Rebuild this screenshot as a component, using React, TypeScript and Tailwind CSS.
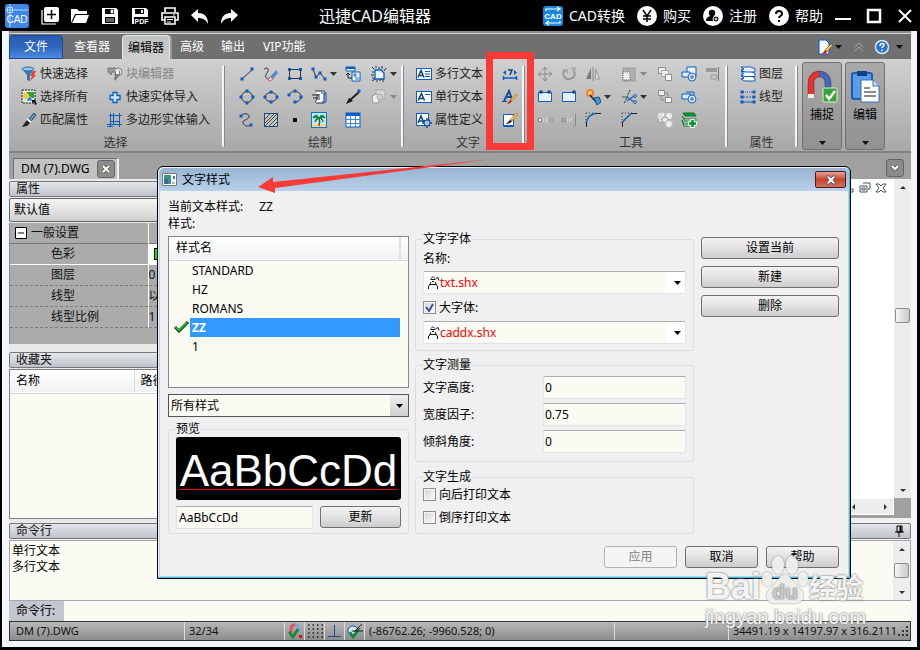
import React from 'react';
import type { ReactNode } from 'react';

const BLUE = '#0b5cc4';
const GRAY = '#8a8a8a';

function Icon({ children, size = 'w-4 h-4', box = '0 0 16 16' }: { children: ReactNode; size?: string; box?: string }) {
  return (
    <svg viewBox={box} className={`${size} shrink-0`} fill="none" aria-hidden="true">
      {children}
    </svg>
  );
}

// Small square handles drawn at the nodes of the drawing tools
function Nodes({ points, color = BLUE }: { points: number[][]; color?: string }) {
  return (
    <>
      {points.map(([x, y]) => (
        <rect key={`${x}-${y}`} x={x - 1.5} y={y - 1.5} width="3" height="3" fill={color} />
      ))}
    </>
  );
}

const icons: Record<string, ReactNode> = {
  filter: (
    <>
      <path d="M1 3l5 6v5l3 1V9l4-6z" fill="#2b7ab8" />
      <ellipse cx="7" cy="3" rx="6" ry="2" fill="#8cc4ea" stroke="#2b6da4" />
      <path d="M12 5l-3 5h2l-2 5 6-6h-2l2-4z" fill="#ee3b35" />
    </>
  ),
  selectAll: (
    <>
      <rect x="1" y="1" width="13" height="13" fill="#d9ead0" stroke="#222" strokeDasharray="2 1" />
      <rect x="6" y="3" width="7" height="6" fill="#3a9c3a" />
      <circle cx="5" cy="7" r="3" fill="#f5c63a" />
      <path d="M5 12l3.500-5 4 5z" fill="#2d7dd2" stroke="#fff" strokeWidth=".6" />
      <path d="M11 11h4l-1 1 2 3-2 1-1-3-2 1z" fill="#111" />
    </>
  ),
  match: (
    <>
      <path d="M8 7l5-6 2 2-5 6z" fill="#5f93cc" stroke="#23466e" />
      <path d="M6 8l3 3-3 3-5 1 2-3z" fill="#222" />
      <path d="M6 7l4 3" stroke="#eee" strokeWidth="2" />
    </>
  ),
  blockEdit: (
    <>
      <path d="M1 2h8v4H5L4 9 2 7V6H1z" fill="#999" stroke="#777" />
      <circle cx="11" cy="6" r="4" fill="#ddd" stroke="#888" />
      <path d="M8 5h5v3l-2 3-3 4-1-2 1-3z" fill="#777" />
      <path d="M9 5h3v3H9z" fill="#fff" />
    </>
  ),
  plusCross: <path d="M6 3.500h4v3h3v4h-3v3H6v-3H3v-4h3z" fill="#cfe4ff" stroke={BLUE} strokeWidth="1.300" />,
  polygonIn: <path d="M3.500 1v14M6.500 1v11M12.500 1v14M0 12.500h15M2 3.500h13M3 9.500h10M0 14.500h6" stroke={BLUE} />,
  line: (
    <>
      <path d="M3 13L13 4" stroke="#333" />
      <Nodes points={[[3, 13], [13, 3]]} />
    </>
  ),
  sketch: (
    <>
      <path d="M1 3c5-3 5 2 3 4s-2 6 2 6" stroke="#333" />
      <path d="M7 11l6-7 2 3-5 6z" fill="#4d8edb" />
      <path d="M7 11l3 2-3 2-2-1z" fill="#f3f3f3" stroke="#e23d3d" strokeWidth=".8" />
    </>
  ),
  rect: (
    <>
      <rect x="2.500" y="3.500" width="11" height="9" stroke="#333" />
      <Nodes points={[[2.5, 3.5], [13.5, 3.5], [2.5, 12.5], [13.5, 12.5]]} />
    </>
  ),
  polyline: (
    <>
      <path d="M2 3l3 8 4-4 5 6" stroke="#333" />
      <Nodes points={[[2, 3], [5, 11], [9, 7], [14, 13]]} />
    </>
  ),
  insertBlock: (
    <>
      <path d="M1 1h9v4H1z" fill="#fff" stroke={BLUE} />
      <path d="M1 2h9" stroke={BLUE} strokeWidth="2" />
      <path d="M7 6h8v9H7z" fill="#fff" stroke={BLUE} />
      <circle cx="10" cy="9" r="2" fill="#5b9be0" />
      <path d="M10 11h4v3h-4z" fill="#8ab9ee" />
      <path d="M3 7v5h4M1 9l2-2 2 2" stroke="#222" />
    </>
  ),
  region: (
    <>
      <path d="M4 4h6l3 3v6H4z" fill="#eaf3ff" stroke={BLUE} strokeWidth="1.300" />
      <path d="M1 1l2 2M5 0v2M8 1v2M11 0v3M15 2l-2 3M1 6h2M0 9h3M1 12h2M1 15l3-2M6 16v-2M9 15v-2M12 16v-3" stroke="#234" />
    </>
  ),
  circle: (
    <>
      <circle cx="8" cy="8" r="5.500" stroke="#333" />
      <Nodes points={[[8, 2], [8, 14], [2, 8], [14, 8]]} />
    </>
  ),
  ellipse: (
    <>
      <ellipse cx="8" cy="8" rx="6" ry="4.500" stroke="#333" />
      <Nodes points={[[8, 3], [8, 13], [2, 8], [14, 8]]} />
    </>
  ),
  arc: (
    <>
      <path d="M2 6c2-5 12-5 12 2 0 3-3 5-6 5" stroke="#333" />
      <Nodes points={[[2, 6], [8, 2], [14, 8], [8, 13]]} />
    </>
  ),
  scroll: (
    <>
      <path d="M4 2h8c3 0 3 3 1 3v9H6c-2 0-2-3 0-3V5" fill="#f5f8fc" stroke="#234" />
      <path d="M10 4h5v9h-4" stroke={BLUE} />
      <path d="M1 6h7M2 9h5M8 5v6" stroke="#333" />
    </>
  ),
  pointer: (
    <>
      <path d="M4 12L14 3" stroke="#222" strokeWidth="2" />
      <path d="M1 15l3-6 4 3z" fill="#111" />
      <Nodes points={[[14, 2]]} />
    </>
  ),
  wipeout: (
    <>
      <path d="M5 1h9v9H5z" fill="#d8d8d8" stroke="#aaa" />
      <path d="M1 7l4-2 4 4-2 5H2z" fill="#eee" stroke="#999" />
      <circle cx="9" cy="8" r="3" fill="#ccc" stroke="#aaa" />
    </>
  ),
  spline: (
    <>
      <path d="M2 4c3-4 9-2 8 1s-7 3-6 6 5 4 8 2" stroke="#333" />
      <Nodes points={[[2, 4], [12, 13]]} />
    </>
  ),
  hatch: (
    <>
      <rect x="1.500" y="1.500" width="13" height="13" fill="#c7c7c7" stroke="#1b4d80" />
      <path d="M2 7l5-5M2 11l9-9M2 14L14 2M6 14l8-8M10 14l4-4" stroke="#444" />
    </>
  ),
  dot: <rect x="6" y="6" width="4" height="4" fill="#111" />,
  palm: (
    <>
      <rect x=".5" y=".5" width="15" height="15" fill="#b9ecf7" stroke="#1673c4" />
      <path d="M1 12h14v3H1z" fill="#f1d58a" />
      <path d="M8 6c1 3 1 5 0 8" stroke="#6b4a1e" strokeWidth="1.500" />
      <path d="M8 6C6 2 3 3 2 6c2-1 4-1 6 0-2 0-4 1-4 4 1-2 3-3 4-4 2 0 3 2 4 4 0-3-1-4-4-4 2-1 4-1 6 0-1-3-4-4-6 0" fill="#12803a" stroke="#12803a" />
    </>
  ),
  table: (
    <>
      <rect x="1" y="1" width="14" height="14" fill="#fff" stroke={BLUE} />
      <path d="M1 2.500h14" stroke={BLUE} strokeWidth="3" />
      <path d="M1 7.500h14M1 11.500h14M5.500 3v12M10.500 3v12" stroke="#3a86d8" />
    </>
  ),
  mtext: (
    <>
      <rect x=".5" y="2.500" width="15" height="11" fill="#fff" stroke={BLUE} />
      <path d="M2 11.500L5 4.500l3 7M3 9.500h4" stroke="#123f7c" strokeWidth="1.500" />
      <path d="M9 5.500h5M9 8h5M9 10.500h5" stroke={BLUE} />
    </>
  ),
  stext: (
    <>
      <rect x=".5" y="2.500" width="15" height="11" fill="#fff" stroke={BLUE} />
      <path d="M2 11.500L5.500 4.500l3 7M3 9.500h4" stroke="#123f7c" strokeWidth="1.500" />
      <path d="M9 5.500h5" stroke={BLUE} />
    </>
  ),
  attr: (
    <>
      <rect x=".5" y="1.500" width="12" height="12" fill="#fff" stroke={BLUE} />
      <path d="M2 11L5 4l3 7M3 9h4" stroke="#123f7c" strokeWidth="1.500" />
      <circle cx="11" cy="11" r="3" fill="#9cc5f2" stroke="#174a8c" />
      <path d="M11 6v2M11 14v2M6 11h2M14 11h2M8 8l1 1M13 13l1 1M14 8l-1 1M8 14l1-1" stroke="#174a8c" strokeWidth="1.500" />
    </>
  ),
  fieldWidth: (
    <>
      <path d="M1.500 10v4M14.500 10v4M1 12h14" stroke={BLUE} strokeWidth="1.500" />
      <path d="M4 4L1 6.500 4 9zM12 4l3 2.500L12 9z" fill={BLUE} />
      <path d="M6 4h4L8 9" stroke="#123f7c" strokeWidth="1.500" />
    </>
  ),
  textStyle: (
    <>
      <path d="M2 12L7 2l3 8M4 8h5" stroke="#174a9c" strokeWidth="2" />
      <path d="M0 12.500h5" stroke="#174a9c" />
      <path d="M8 11l6-6 2 1-6 6z" fill="#f6c343" stroke="#8a5a10" strokeWidth=".5" />
      <path d="M5 15l3-4 2 1c-1 2-3 3-5 3z" fill="#c22" />
    </>
  ),
  textEdit: (
    <>
      <path d="M1.500 2.500h10v12h-10z" fill="#fff" stroke={BLUE} />
      <path d="M2 14h9" stroke={BLUE} strokeWidth="2" />
      <path d="M8 8l6-7 2 1-6 7z" fill="#f6c343" stroke="#8a5a10" strokeWidth=".5" />
      <path d="M4 12l4-4 2 1c-1 2-4 3-6 3z" fill="#222" />
    </>
  ),
  move: <path d="M8 1v14M1 8h14M5.500 4L8 1l2.500 3M5.500 12L8 15l2.500-3M4 5.500L1 8l3 2.500M12 5.500L15 8l-3 2.500" stroke={GRAY} />,
  rotate: (
    <>
      <path d="M4 4c-4 4 0 10 5 9 5-1 6-6 3-9" stroke="#999" strokeWidth="2" />
      <path d="M1 3h6v5zM9 2l6-1-1 5z" fill="#aaa" />
    </>
  ),
  mirror: (
    <>
      <path d="M6 2v11H1z" fill="#777" />
      <path d="M10.500 3v10h4z" fill="#ddd" stroke="#999" />
      <path d="M8 1v14" stroke="#888" />
    </>
  ),
  scale: (
    <>
      <rect x="2" y="2" width="12" height="13" fill="#b0b0b0" stroke="#999" />
      <rect x="2" y="6" width="7" height="8" fill="#eee" stroke="#666" strokeDasharray="1 1" />
    </>
  ),
  copies: (
    <>
      <path d="M1.500 1.500h7v6h-7z" fill="#eee" stroke={GRAY} />
      <path d="M4.500 4.500h7v6h-7z" fill="#eee" stroke="#aaa" />
      <path d="M8.500 8.500h6v6h-6z" fill="#f7f7f7" stroke={GRAY} />
    </>
  ),
  copies2: (
    <>
      <path d="M1.500 1.500h6v5h-6z" fill="#eee" stroke={GRAY} />
      <path d="M4 7v4h3M8 4h3v4" stroke={GRAY} />
      <path d="M8.500 8.500h6v5h-6z" fill="#f7f7f7" stroke={GRAY} />
    </>
  ),
  blobs: (
    <>
      <circle cx="4" cy="4" r="3.500" fill="#ddd" />
      <circle cx="12" cy="4" r="3" fill="#eee" />
      <circle cx="8" cy="8" r="3" fill="#e8e8e8" stroke="#999" />
      <circle cx="12" cy="12" r="3.500" fill="#eee" stroke="#bbb" />
      <path d="M6 1l1 3M2 8l3 1" stroke="#fff" />
    </>
  ),
  group: (
    <>
      <path d="M6 1h9v9H6z" fill="#eaf3ff" stroke={BLUE} />
      <path d="M1 6h8v5H1z" fill="#dcebff" stroke={BLUE} />
      <circle cx="11" cy="11" r="4" fill="#cfe2fa" stroke="#2867b4" />
      <path d="M11 9v4M9 11h4" stroke="#2867b4" />
    </>
  ),
  group2: (
    <>
      <path d="M5 3h8v4" stroke={BLUE} />
      <path d="M1 5h9v5H1z" fill="#dcebff" stroke={BLUE} />
      <circle cx="11" cy="10" r="4" fill="#cfe2fa" stroke="#2867b4" />
      <path d="M11 8v4M9 10h4" stroke="#2867b4" />
    </>
  ),
  layersAdd: (
    <>
      <path d="M2 1h11l2 3H4z" fill="#15943c" stroke="#0e6e2b" />
      <path d="M1 4l2 3h12v2H4z" fill="#e8f7ea" stroke="#0f7a31" />
      <path d="M1 8l2 4h5v2H3z" fill="#e8f7ea" stroke="#0f7a31" />
      <path d="M7 11.500h9M11.500 7v9" stroke="#e8f7ea" strokeWidth="4.500" />
      <path d="M8 11.500h7M11.500 8v7" stroke="#0c8f33" strokeWidth="2.500" />
    </>
  ),
  align: (
    <>
      <path d="M1 2h11v4H1z" fill="#999" />
      <path d="M6 9h6v4H6z" stroke="#999" />
      <path d="M13.500 1v14" stroke="#777" />
    </>
  ),
  breakRect: (
    <>
      <path d="M1.500 3.500h13v9h-13z" fill="#e4f0ff" stroke={BLUE} />
      <Nodes points={[[4, 3], [12, 3]]} color="#123f8c" />
    </>
  ),
  joinRect: (
    <>
      <path d="M1.500 3.500h13v9h-13z" fill="#e4f0ff" stroke={BLUE} />
      <Nodes points={[[13, 3]]} color="#123f8c" />
    </>
  ),
  explode: (
    <>
      <circle cx="5" cy="4" r="4" fill="#ee7d3a" />
      <circle cx="5" cy="4" r="2" fill="#ffd25e" />
      <path d="M5 6l6 7" stroke="#222" strokeWidth="1.500" />
      <path d="M9 9l5-1 2 5-4 3z" fill="#4a97d4" stroke="#1a4c80" />
    </>
  ),
  trim: (
    <>
      <path d="M9 1L3 15" stroke="#333" strokeDasharray="2 1" />
      <path d="M1 8h6" stroke="#555" />
      <path d="M6 8l7 5M6 12l7-5" stroke="#2867b4" strokeWidth="1.500" />
      <circle cx="14" cy="7" r="1.500" stroke="#2867b4" />
      <circle cx="14" cy="13" r="1.500" stroke="#2867b4" />
    </>
  ),
  stretch: (
    <>
      <path d="M1.500 6.500h3v3h-3z" fill="#fff" stroke="#888" />
      <path d="M6 7h6M6 9h6" stroke="#eee" strokeDasharray="1 1" />
      <path d="M12.500 6.500h3v3h-3z" stroke="#999" />
    </>
  ),
  extend: (
    <>
      <path d="M1.500 6.500h3v3h-3z" stroke="#888" />
      <path d="M6 7h6M6 9h6" stroke="#eee" strokeDasharray="1 1" />
      <path d="M14.500 2v12h-2" stroke="#888" />
    </>
  ),
  fillet: (
    <>
      <path d="M1 1h12M1 1v12" stroke="#333" strokeDasharray="1 2" />
      <path d="M1.500 15v-4M11 1.500h5" stroke="#222" />
      <path d="M1.500 11c0-5 4-9 9-9.500" stroke={BLUE} strokeWidth="1.500" />
    </>
  ),
  chamfer: (
    <>
      <path d="M1 1h12M1 1v12" stroke="#333" strokeDasharray="1 2" />
      <path d="M1.500 15v-5M10 1.500h6" stroke="#222" />
      <path d="M1.500 10L10 1.500" stroke={BLUE} strokeWidth="1.500" />
    </>
  ),
  layers: (
    <>
      <path d="M1 10h10l4 2v3H5l-4-2 3-1z" fill="#fff" stroke={BLUE} />
      <path d="M1 5.500h10l4 2v3H5l-4-2 3-1z" fill="#fff" stroke={BLUE} />
      <path d="M1 1h10l4 2v3H5L1 4l3-1z" fill="#e4f0ff" stroke={BLUE} />
    </>
  ),
  linetype: (
    <>
      <path d="M3 3h10" stroke={BLUE} strokeDasharray="1 1" />
      <path d="M3 8h10" stroke={BLUE} strokeDasharray="2 1" />
      <path d="M3 13h10" stroke={BLUE} />
      <Nodes points={[[2, 3], [14, 3], [2, 8], [14, 8], [2, 13], [14, 13]]} />
    </>
  ),
};

function Caret({ color = '#333' }: { color?: string }) {
  return (
    <svg viewBox="0 0 7 4" className="w-[7px] h-1 shrink-0" aria-hidden="true">
      <path d="M0 0h7L3.500 4z" fill={color} />
    </svg>
  );
}

function Tool({ name, label, muted, caret }: { name: string; label?: string; muted?: boolean; caret?: string }) {
  return (
    <button
      aria-label={label ? undefined : name}
      className={`flex items-center h-[23px] whitespace-nowrap ${muted ? 'text-[#868686]' : 'text-[#222]'}`}
    >
      <Icon>{icons[name]}</Icon>
      {label && <span className="ml-[3px]">{label}</span>}
      {caret && <span className="ml-[3px]"><Caret color={caret} /></span>}
    </button>
  );
}

function Group({ title, children }: { title: string; children: ReactNode }) {
  return (
    <section className="flex flex-col items-start pt-[3px]">
      {children}
      <h2 className="w-full text-center leading-5 mt-0.5 text-[#333]">{title}</h2>
    </section>
  );
}

function Separator() {
  return <div className="w-[3px] h-[82px] mt-1.5 rounded-full bg-[#f4f4fa] border-r border-[#888] shrink-0" />;
}

const drawTools: [string, string?][] = [
  ['line'], ['sketch'], ['rect'], ['polyline', '#333'], ['insertBlock'], ['region', '#333'],
  ['circle'], ['ellipse'], ['arc'], ['scroll'], ['pointer'], ['wipeout', '#888'],
  ['spline'], ['hatch'], ['dot'], ['palm'], ['table'],
];

const editTools: [string, string?][] = [
  ['move'], ['rotate'], ['mirror'], ['scale', '#888'], ['copies'], ['group'], ['align'],
  ['breakRect'], ['joinRect'], ['explode', '#333'], ['trim', '#333'], ['copies2'], ['group2'], [''],
  ['stretch'], ['extend'], ['fillet'], ['chamfer'], ['blobs'], ['layersAdd'],
];

function TitleBar() {
  const links = [
    {
      label: 'CAD转换',
      icon: (
        <>
          <rect width="20" height="20" rx="3" fill="#1787e0" />
          <path d="M3 5V3h13M14 1l3 2-3 2M17 15v2H4M6 15l-3 2 3 2" stroke="#fff" strokeWidth="1.200" />
          <text x="10" y="13" textAnchor="middle" fontSize="8" fontWeight="bold" fontFamily="Liberation Sans, sans-serif" fill="#fff">CAD</text>
        </>
      ),
    },
    {
      label: '购买',
      icon: (
        <>
          <circle cx="10" cy="10" r="10" fill="#fff" />
          <path d="M6 4l4 6 4-6M10 10v6M6 10h8M6 13h8" stroke="#000" strokeWidth="1.500" />
        </>
      ),
    },
    {
      label: '注册',
      icon: (
        <>
          <circle cx="10" cy="10" r="10" fill="#fff" />
          <circle cx="9" cy="7" r="3.200" fill="#000" />
          <path d="M3 15c0-3 2-5 6-5s5 2 5 5z" fill="#000" />
          <circle cx="13" cy="13" r="3" fill="#000" stroke="#fff" />
          <path d="M11.500 13h3M13 11.500v3" stroke="#fff" />
        </>
      ),
    },
    {
      label: '帮助',
      icon: (
        <>
          <circle cx="10" cy="10" r="10" fill="#fff" />
          <path d="M7 8c0-4 6-4 6 0 0 2-3 2-3 4M10 14v2" stroke="#000" strokeWidth="2" />
        </>
      ),
    },
  ];

  return (
    <header className="h-[31px] flex items-center justify-between bg-black text-white pl-[5px] pr-[7px] whitespace-nowrap">
      <div className="flex items-center">
        <Icon size="w-6 h-6" box="0 0 24 24">
          <rect width="24" height="24" rx="3" fill="#3f87e6" />
          <path d="M5 0v23M0 6h23M2.500 3.500h5v5h-5z" stroke="#b9d8ff" />
          <text x="12" y="19" textAnchor="middle" fontSize="10" fontFamily="Liberation Sans, sans-serif" fill="#fff">CAD</text>
        </Icon>
        <div className="flex items-center gap-3 ml-3">
          <button aria-label="新建">
            <Icon size="w-[18px] h-[18px]" box="0 0 18 18">
              <path d="M1 3v14h14" stroke="#fff" strokeWidth="1.200" />
              <rect x="3" y="0" width="15" height="15" rx="2" fill="#fff" />
              <path d="M10.500 3v9M6 7.500h9" stroke="#000" strokeWidth="1.500" />
            </Icon>
          </button>
          <button aria-label="打开">
            <Icon size="w-[18px] h-[18px]" box="0 0 18 18">
              <path d="M0 16V2h6l2 2h8v3H4z" fill="#fff" />
              <path d="M5 8h13l-3 8H1z" fill="#fff" />
            </Icon>
          </button>
          <button aria-label="保存">
            <Icon size="w-[18px] h-[18px]" box="0 0 18 18">
              <path d="M1 1h14l2 2v14H1z" fill="#fff" />
              <path d="M4 2h9v5H4zM4 10h10v6H4z" fill="#000" />
              <path d="M10 3h2v3h-2zM5 12h8M5 14h8" fill="#fff" stroke="#fff" strokeWidth=".8" />
            </Icon>
          </button>
          <button aria-label="PDF">
            <Icon size="w-[18px] h-[18px]" box="0 0 18 18">
              <path d="M1 1h14l2 2v14H1z" fill="#fff" />
              <path d="M4 2h9v5H4zM3 10h15v8H3z" fill="#000" />
              <path d="M10 3h2v3h-2z" fill="#fff" />
              <text x="10.500" y="17" textAnchor="middle" fontSize="7" fontWeight="bold" fontFamily="Liberation Sans, sans-serif" fill="#fff">PDF</text>
            </Icon>
          </button>
          <button aria-label="打印">
            <Icon size="w-[18px] h-[18px]" box="0 0 18 18">
              <path d="M4 5V1h10v4M4 13H1V6h16v7h-3" stroke="#fff" strokeWidth="1.600" />
              <path d="M4 10h10v7H4z" stroke="#fff" strokeWidth="1.500" />
              <path d="M6 12.500h6M6 15h4M12 8h2" stroke="#fff" />
            </Icon>
          </button>
          <button aria-label="撤销">
            <Icon size="w-[18px] h-[18px]" box="0 0 18 18">
              <path d="M0 8l7-6v4c7 0 10 4 10 11-2-4-5-6-10-6v4z" fill="#fff" />
            </Icon>
          </button>
          <button aria-label="重做">
            <Icon size="w-[18px] h-[18px]" box="0 0 18 18">
              <path d="M17 8l-7-6v4C3 6 0 10 0 17c2-4 5-6 10-6v4z" fill="#fff" />
            </Icon>
          </button>
        </div>
      </div>
      <h1 className="text-base leading-6 mr-8">迅捷CAD编辑器</h1>
      <div className="flex items-center">
        <nav className="flex items-center gap-3 text-sm">
          {links.map((link) => (
            <a key={link.label} href="#" className="flex items-center gap-1.5">
              <Icon size="w-5 h-5" box="0 0 20 20">{link.icon}</Icon>
              {link.label}
            </a>
          ))}
        </nav>
        <div className="flex items-center gap-[15px] ml-3">
          <button aria-label="最小化">
            <Icon><path d="M0 11h16" stroke="#fff" strokeWidth="2" /></Icon>
          </button>
          <button aria-label="最大化">
            <Icon><path d="M2 2h12v12H2z" stroke="#fff" strokeWidth="2.500" /></Icon>
          </button>
          <button aria-label="关闭">
            <Icon><path d="M2 2l12 12M14 2L2 14" stroke="#fff" strokeWidth="2" /></Icon>
          </button>
        </div>
      </div>
    </header>
  );
}

function RibbonTabs() {
  return (
    <nav className="h-7 flex items-end bg-[#707070] border-t-2 border-[#8b8b8b] shadow-[inset_0_1px_0_#d8d8d8] text-white whitespace-nowrap">
      <button className="w-[54px] h-6 rounded-t-sm border border-[#1b4a9a] bg-linear-to-b from-[#2a5db4] via-[#2f66bf] to-[#4b8ce0]">
        文件
      </button>
      <button className="h-6 ml-[11px]">查看器</button>
      <button className="h-6 ml-3 px-[5px] text-black rounded-t-sm border border-b-0 border-[#d8f0f0] bg-linear-to-b from-[#c0c0c0] to-[#cfcfcf] shadow-[2px_0_0_#999]">
        编辑器
      </button>
      <button className="h-6 ml-2.5">高级</button>
      <button className="h-6 ml-[17px]">输出</button>
      <button className="h-6 ml-[18px]">VIP功能</button>
      <div className="ml-auto h-6 flex items-center pr-2">
        <button aria-label="样式" className="flex items-center gap-0.5">
          <Icon>
            <path d="M2 1h7l3 3v11H2z" fill="#f4f9ff" stroke={BLUE} />
            <path d="M8 11l6-6 2 1-6 7z" fill="#f6c343" stroke="#333" strokeWidth=".5" />
            <path d="M5 15l3-4 2 2c-1 2-3 2-5 2z" fill="#c22" />
          </Icon>
          <Caret color="#111" />
        </button>
        <button aria-label="折叠" className="ml-3">
          <Icon size="w-2.5 h-3" box="0 0 10 12">
            <path d="M1 6l4-4 4 4M1 10l4-4 4 4" stroke="#aaa" />
          </Icon>
        </button>
        <button aria-label="帮助" className="flex items-center gap-1.5 ml-2.5">
          <Icon>
            <circle cx="8" cy="8" r="6.500" fill="#2f73c8" stroke="#d4e6fa" strokeWidth="1.500" />
            <path d="M6 7c0-3 4-3 4-1 0 1.500-2 1.500-2 3M8 10.500v1.500" stroke="#fff" strokeWidth="1.500" />
          </Icon>
          <Caret color="#111" />
        </button>
      </div>
    </nav>
  );
}

function BigButton({ label, children }: { label: string; children: ReactNode }) {
  return (
    <button className="w-10 h-[88px] mt-[3px] flex flex-col items-center rounded-[3px] border border-[#6f6f6f] bg-linear-to-b from-[#a9a9a9] to-[#929292] text-black">
      <span className="mt-1.5"><Icon size="w-8 h-9" box="0 0 32 36">{children}</Icon></span>
      <span className="leading-5">{label}</span>
      <span className="mt-auto mb-1 flex"><Caret color="#111" /></span>
    </button>
  );
}

function Ribbon() {
  return (
    <div className="h-[94px] flex items-start bg-linear-to-b from-[#d0d0d0] to-[#a8a8a8] border-b-2 border-[#828282]">
      <div className="px-3">
        <Group title="选择">
          <div className="grid grid-cols-[86px_103px]">
            <Tool name="filter" label="快速选择" />
            <Tool name="blockEdit" label="块编辑器" muted />
            <Tool name="selectAll" label="选择所有" />
            <Tool name="plusCross" label="快速实体导入" />
            <Tool name="match" label="匹配属性" />
            <Tool name="polygonIn" label="多边形实体输入" />
          </div>
        </Group>
      </div>
      <Separator />
      <div className="pl-3.5">
        <Group title="绘制">
          <div className="grid grid-cols-[24px_24px_24px_34px_26px_30px]">
            {drawTools.map(([name, caret]) => <Tool key={name} name={name} caret={caret} />)}
          </div>
        </Group>
      </div>
      <Separator />
      <div className="pl-3 pr-0.5">
        <Group title="文字">
          <div className="grid grid-cols-[86px_18px]">
            <Tool name="mtext" label="多行文本" />
            <Tool name="fieldWidth" />
            <Tool name="stext" label="单行文本" />
            <Tool name="textStyle" />
            <Tool name="attr" label="属性定义" />
            <Tool name="textEdit" />
          </div>
        </Group>
      </div>
      <Separator />
      <div className="pl-3">
        <Group title="工具">
          <div className="grid grid-cols-[24px_24px_36px_36px_24px_24px_20px]">
            {editTools.map(([name, caret]) => (name ? <Tool key={name} name={name} caret={caret} /> : <span key="gap" />))}
          </div>
        </Group>
      </div>
      <Separator />
      <div className="px-3">
        <Group title="属性">
          <div className="flex flex-col h-[69px]">
            <Tool name="layers" label="图层" />
            <Tool name="linetype" label="线型" />
          </div>
        </Group>
      </div>
      <Separator />
      <div className="flex gap-[3px] pl-1">
        <BigButton label="捕捉">
          <path d="M5 28V14C5 2 22 2 22 14v6" stroke="#8c2c2c" strokeWidth="6.500" />
          <path d="M5 28V14c0-6 4-9 8.500-9" stroke="#e8322e" strokeWidth="5" />
          <path d="M13.500 5c4.500 0 8.500 3 8.500 9v6" stroke="#2f6fd0" strokeWidth="5" />
          <path d="M2 25h6v4H2z" fill="#eee" />
          <rect x="17" y="19" width="14" height="14" rx="1" fill="#3aa23a" stroke="#d9f0d0" />
          <path d="M20 26l3 4 6-8" stroke="#fff" strokeWidth="2.500" />
        </BigButton>
        <BigButton label="编辑">
          <rect x="3" y="4" width="20" height="26" rx="2" fill="#5a9bea" stroke="#1c5ab4" strokeWidth="2" />
          <path d="M8 2h10v5H8z" fill="#123f8c" />
          <path d="M12 11h12l6 6v16H12z" fill="#fff" stroke="#2f6fc8" />
          <path d="M24 11v6h6" fill="#cfe2fa" stroke="#2f6fc8" />
          <path d="M15 19h6M15 23h12M15 27h12" stroke="#666" strokeWidth="1.500" />
        </BigButton>
      </div>
    </div>
  );
}

function PanelHeader({ title, children }: { title: string; children?: ReactNode }) {
  return (
    <div className="h-4 flex items-center shrink-0 pl-1.5 leading-4 rounded-[2px] border border-[#777] bg-linear-to-b from-[#e4e6ea] to-[#bfc3ca] text-[#111]">
      <h2>{title}</h2>
      {children}
    </div>
  );
}

function ScrollArrow({ d }: { d: string }) {
  return (
    <svg viewBox="0 0 8 8" className="w-2 h-2 shrink-0" aria-hidden="true">
      <path d={d} fill="#333" />
    </svg>
  );
}

function VerticalScroll({ above, below }: { above: number; below: number }) {
  return (
    <div className="w-[17px] shrink-0 flex flex-col items-center py-1 bg-[#ededed]">
      <ScrollArrow d="M1 6h6L4 3z" />
      <div style={{ flexGrow: above }} />
      <div className="w-[15px] h-[15px] shrink-0 rounded-[2px] border border-[#8f8f8f] bg-linear-to-r from-[#f6f6f6] to-[#c9c9cb]" />
      <div style={{ flexGrow: below }} />
      <ScrollArrow d="M1 3h6L4 6z" />
    </div>
  );
}

function SidePanel() {
  const rows = [
    ['图层', '0'],
    ['线型', '以图层'],
    ['线型比例', '1'],
  ];
  return (
    <aside className="w-[245px] shrink-0 flex flex-col bg-[#e9e9e9]">
      <div className="pt-0.5"><PanelHeader title="属性" /></div>
      <select
        aria-label="默认值"
        className="appearance-none h-6 px-1 my-px rounded-[2px] border border-[#666] bg-linear-to-b from-[#f6f6f6] to-[#cfcfcf] leading-5"
      >
        <option>默认值</option>
      </select>
      <div className="h-[121px] bg-[#ababab] border-l border-[#888]">
        <table className="w-full table-fixed border-collapse text-[#111]">
          <tbody>
            <tr className="h-5">
              <th scope="row" className="w-[138px] pl-[5px] font-normal text-left">
                <span className="flex items-center gap-1">
                  <Icon size="w-3 h-3" box="0 0 12 12">
                    <path d="M.5 .5h11v11H.5z" fill="#fff" stroke="#000" />
                    <path d="M3 6h6" stroke="#000" />
                  </Icon>
                  一般设置
                </span>
              </th>
              <td className="border-l border-white" />
            </tr>
            <tr className="h-[21px] border-t border-[#777] border-b border-b-white">
              <th scope="row" className="pl-[41px] font-normal text-left">色彩</th>
              <td className="pl-[5px] border-l border-white bg-[#fcfbf3]">
                <span className="block w-3 h-3 bg-[#00e800] border border-black" />
              </td>
            </tr>
            {rows.map(([name, value]) => (
              <tr key={name} className="h-[21px] border-b border-dashed border-[#7c7c7c]">
                <th scope="row" className="pl-[41px] font-normal text-left">{name}</th>
                <td className="border-l border-l-white [border-left-style:solid] whitespace-nowrap overflow-hidden">{value}</td>
              </tr>
            ))}
          </tbody>
        </table>
      </div>
      <div className="pt-2"><PanelHeader title="收藏夹" /></div>
      <div className="flex-1 mt-px mb-1 border border-[#808080] bg-[#fcfbf3]">
        <table className="w-full table-fixed">
          <thead>
            <tr className="h-[23px] bg-linear-to-b from-white to-[#f0f1f3] border-b border-[#d5d5d5] text-left">
              <th scope="col" className="w-[124px] pl-1.5 font-normal border-r border-[#dcdcdc]">名称</th>
              <th scope="col" className="pl-1.5 font-normal">路径</th>
            </tr>
          </thead>
        </table>
      </div>
    </aside>
  );
}

function DocumentArea() {
  return (
    <main className="flex-1 flex flex-col bg-[#a0a0a0]">
      <div className="flex-1 flex">
        <div className="flex-1 flex justify-end items-start gap-1 bg-white pt-[3px] pr-[7px]">
          <button aria-label="最小化图纸">
            <Icon size="w-3 h-3" box="0 0 12 12">
              <path d="M1 7h9v3H1z" stroke="#46515f" />
            </Icon>
          </button>
          <button aria-label="还原">
            <Icon size="w-3 h-3" box="0 0 12 12">
              <path d="M4 1h7v6H9M1 4h7v6H1zM3 6h3v2H3z" stroke="#46515f" />
            </Icon>
          </button>
          <button aria-label="关闭图纸">
            <Icon size="w-3 h-3" box="0 0 12 12">
              <path d="M1 2h3l2 2 2-2h3L8 6l3 4H8L6 8l-2 2H1l3-4z" stroke="#46515f" />
            </Icon>
          </button>
        </div>
        <VerticalScroll above={5} below={7} />
      </div>
      <div className="flex h-5 items-start">
        <div className="flex-1 h-[17px] flex items-center justify-end gap-6 pr-1 bg-[#ededed] border border-white">
          <ScrollArrow d="M6 1v6L3 4z" />
          <ScrollArrow d="M3 1v6l3-3z" />
        </div>
        <div className="w-[17px]" />
      </div>
      <div className="h-[5px] bg-[#f0f0f0]" />
    </main>
  );
}

function CommandArea() {
  return (
    <section className="flex flex-col bg-[#f0f0f0]">
      <PanelHeader title="命令行">
        <span className="ml-auto pr-1.5">
          <Icon size="w-2.5 h-3" box="0 0 10 12">
            <path d="M3 1h5v6H3zM1 7h9M5 7v5" stroke="#000" />
            <path d="M6.500 1v6" stroke="#000" strokeWidth="2" />
          </Icon>
        </span>
      </PanelHeader>
      <div className="flex h-[61px] mt-px border border-[#a5a5ae] bg-[#fcfbf3]">
        <div className="flex-1 pl-0.5 pt-0.5 leading-4">
          <p>单行文本</p>
          <p>多行文本</p>
        </div>
        <VerticalScroll above={1} below={1} />
      </div>
      <div className="flex h-5 bg-[#fcfbf3]">
        <label htmlFor="command" className="w-[55px] pl-[7px] leading-5 bg-[#c3c6ce]">命令行:</label>
        <input id="command" className="flex-1 px-1 bg-transparent outline-none" />
      </div>
    </section>
  );
}

function StatusBar() {
  return (
    <footer className="h-5 flex items-stretch border border-[#333] bg-linear-to-b from-[#b9b9b9] to-[#8c8c8c] text-[11px] leading-[18px] text-[#111] divide-x divide-[#ddd] whitespace-nowrap">
      <span className="w-[175px] pl-1.5">DM (7).DWG</span>
      <span className="w-[100px] pl-1">32/34</span>
      <button aria-label="捕捉" className="w-5 flex items-center justify-center">
        <Icon>
          <path d="M4 11V6c0-6 8-6 8 0v4" stroke="#8a9fd0" strokeWidth="3" />
          <path d="M4 10V6c0-3 2-4 4-4" stroke="#e0575a" strokeWidth="3" />
          <path d="M2 9l4 5 5-8" stroke="#0a8a2a" strokeWidth="2.500" />
          <path d="M12 12h3v3h-3z" fill="#d11" />
        </Icon>
      </button>
      <button aria-label="栅格" className="w-5 flex items-center justify-center">
        <Icon>
          <path d="M1 2h15M1 6h15M1 10h15M1 14h15" stroke="#222" strokeWidth="1.500" strokeDasharray="1.500 3" />
        </Icon>
      </button>
      <button aria-label="正交" className="w-5 flex items-center justify-center">
        <Icon><path d="M7.500 2v11M1 13.500h13" stroke="#174a9c" /></Icon>
      </button>
      <button aria-label="追踪" className="w-5 flex items-center justify-center">
        <Icon>
          <circle cx="6" cy="8" r="5" fill="#dceaf8" stroke="#1c5ab4" />
          <path d="M3 9l3 5 6-9" stroke="#0a8a2a" strokeWidth="2.500" />
          <path d="M7 9L15 1M5 8h11" stroke="#222" />
        </Icon>
      </button>
      <span className="w-[250px] pl-1">(-86762.26; -9960.528; 0)</span>
      <span className="flex-1" />
      <span className="pl-1 pr-0.5 flex items-center gap-px">
        34491.19 x 14197.97 x 316.2111
        <Icon size="w-2.5 h-2.5" box="0 0 10 10">
          <path d="M8 0h2v2H8zM8 4h2v2H8zM8 8h2v2H8zM4 4h2v2H4zM4 8h2v2H4zM0 8h2v2H0z" fill="#333" />
        </Icon>
      </span>
    </footer>
  );
}

function DialogButton({ children, className = '', disabled }: { children: ReactNode; className?: string; disabled?: boolean }) {
  return (
    <button
      disabled={disabled}
      className={`h-[22px] leading-5 rounded-[3px] border ${
        disabled
          ? 'border-[#adb2b5] bg-[#f4f4f4] text-[#838383]'
          : 'border-[#707070] bg-linear-to-b from-[#f4f4f4] from-0% via-[#e2e2e2] via-50% to-[#cdcdcd] text-black'
      } ${className}`}
    >
      {children}
    </button>
  );
}

function FontSelect({ id, value, label }: { id: string; value: string; label: string }) {
  return (
    <div className="h-[23px] flex items-center pl-[3px] pr-1 bg-white border border-[#e2e3ea] border-t-[#abadb3] rounded-[2px]">
      <Icon size="w-[13px] h-[14px]" box="0 0 13 14">
        <path d="M3.500 3.500h5M4 2.500c1-2 3-2 4 0M5 5.500h2M4 6l-2 4M8 6l2 4M3 8.500h6M1.500 10v3M10.500 10v3M9 2.500l2-1 1 3" stroke="#111" />
      </Icon>
      <select id={id} aria-label={label} className="appearance-none flex-1 min-w-0 h-[21px] leading-5 text-[#f00] bg-[#fcfbf3] outline-none">
        <option>{value}</option>
      </select>
      <span className="pl-2"><Caret color="#000" /></span>
    </div>
  );
}

function Check({ id, label, checked }: { id: string; label: string; checked?: boolean }) {
  return (
    <div className="h-[19px] flex items-center gap-[3px]">
      <span className="grid w-[13px] h-[13px]">
        <input
          id={id}
          type="checkbox"
          defaultChecked={checked}
          className="peer appearance-none col-start-1 row-start-1 w-[13px] h-[13px] border border-[#8e8f8f] bg-linear-to-br from-[#cfd2d8] to-white shadow-[inset_0_0_0_1px_#f4f4f4]"
        />
        <svg viewBox="0 0 13 13" className="hidden peer-checked:block col-start-1 row-start-1 w-[13px] h-[13px] pointer-events-none" fill="none" aria-hidden="true">
          <path d="M3 6l3 4 4-7" stroke="#3f5293" strokeWidth="2" />
        </svg>
      </span>
      <label htmlFor={id}>{label}</label>
    </div>
  );
}

function FieldGroup({ title, className = '', children }: { title: string; className?: string; children: ReactNode }) {
  return (
    <fieldset className={`min-w-0 border border-[#d5dfe5] rounded-[3px] px-[7px] ${className}`}>
      <legend className="leading-4">{title}</legend>
      {children}
    </fieldset>
  );
}

const measures = [
  { id: 'height', label: '文字高度:', value: '0' },
  { id: 'width', label: '宽度因子:', value: '0.75' },
  { id: 'angle', label: '倾斜角度:', value: '0' },
];

function TextStyleDialog() {
  const styles = ['STANDARD', 'HZ', 'ROMANS', 'ZZ', '1'];
  const inputClass = 'h-[23px] bg-[#fcfbf3] border border-[#e2e3ea] border-t-[#abadb3] outline-none';
  return (
    <div
      role="dialog"
      aria-labelledby="dialog-title"
      className="absolute left-[157px] top-[166px] w-[694px] rounded-t-md border border-black bg-[#b9d1ea] px-0.5 pb-0.5 shadow-[inset_-1px_-1px_0_#35c4ea,inset_1px_1px_0_#e8f2fa]"
    >
      <div className="h-[23px] mt-px -mx-px px-[3px] flex items-center bg-linear-to-b from-[#98b4d2] to-[#b9d1ea] rounded-t-md">
        <Icon size="w-[15px] h-[13px]" box="0 0 15 13">
          <path d="M.5 .5h14v12H.5z" fill="#fff" stroke="#777" />
          <path d="M2 2h7v9H2z" fill="#3a9a78" />
          <path d="M2 6h4v5H2z" fill="#2c6da8" />
          <path d="M11 3h2v3h-2z" fill="#3a7a9a" />
          <path d="M10 9h3v2h-3z" fill="#bbb" />
        </Icon>
        <h2 id="dialog-title" className="ml-[5px]">文字样式</h2>
        <button
          aria-label="关闭对话框"
          className="ml-auto w-[31px] h-[17px] flex items-center justify-center rounded-[2px] border border-[#4a1c20] bg-linear-to-b from-[#e4a195] from-0% via-[#c8432c] via-50% to-[#d1705a]"
        >
          <Icon size="w-3 h-2.5" box="0 0 12 10">
            <path d="M1 1h3l2 2 2-2h3L8 5l3 4H8L6 7 4 9H1l3-4z" fill="#fff" stroke="#444a5c" strokeWidth=".8" />
          </Icon>
        </button>
      </div>
      <div className="bg-[#f0f0f0] pt-[7px] pl-2 pr-[9px] pb-2">
        <p className="leading-[17px]">当前文本样式:<span className="ml-4">ZZ</span></p>
        <p className="leading-[17px]">样式:</p>
        <div className="flex items-start">
          <div className="w-[241px] mt-1">
            <div className="h-[152px] border border-[#828790] bg-[#fcfbf3]">
              <table className="w-full border-collapse">
                <thead>
                  <tr className="h-[23px] bg-linear-to-b from-white to-[#f0f1f3] border-b border-[#d5d5d5]">
                    <th scope="col" colSpan={2} className="pl-[7px] text-left font-normal">样式名</th>
                    <th className="w-2 border-l-2 border-[#dfe0e2]" />
                  </tr>
                </thead>
                <tbody>
                  {styles.map((name) => (
                    <tr key={name} className="h-[19px] leading-[19px]">
                      <td className="w-[21px] pl-[5px]">
                        {name === 'ZZ' && (
                          <Icon size="w-4 h-3" box="0 0 16 12">
                            <path d="M1 6l4 4L14 1" stroke="#0b3d16" strokeWidth="3" />
                            <path d="M1.500 6L5 9.500 13 1.500" stroke="#1fc93b" strokeWidth="1.500" />
                          </Icon>
                        )}
                      </td>
                      <td className={name === 'ZZ' ? 'pl-0.5 bg-[#3399ff] text-white font-bold' : 'pl-0.5'}>{name}</td>
                      <td />
                    </tr>
                  ))}
                </tbody>
              </table>
            </div>
            <div className="mt-1.5 h-[23px] flex items-center border border-[#555] bg-[#fcfbf3]">
              <select aria-label="样式过滤" className="appearance-none flex-1 h-[21px] pl-0.5 leading-5 bg-transparent outline-none">
                <option>所有样式</option>
              </select>
              <span className="w-[18px] h-[21px] flex items-center justify-center bg-linear-to-b from-[#eee] to-[#cfcfcf]">
                <Caret color="#000" />
              </span>
            </div>
            <FieldGroup title="预览" className="mt-1 pb-1">
              <div className="h-[63px] px-1 rounded-[3px] bg-black overflow-hidden">
                <div className="h-[53px] flex items-end justify-center border-b border-[#f00] font-['Liberation_Sans',sans-serif] text-[44px] leading-[36px] text-white">
                  AaBbCcDd
                </div>
              </div>
              <div className="mt-1.5 flex items-start gap-[7px]">
                <input aria-label="预览文字" defaultValue="AaBbCcDd" className={`${inputClass} flex-1 min-w-0 pl-0.5`} />
                <DialogButton className="w-[81px]">更新</DialogButton>
              </div>
            </FieldGroup>
          </div>
          <div className="w-[279px] ml-1.5 -mt-px">
            <FieldGroup title="文字字体" className="pb-1.5">
              <label htmlFor="font-name" className="flex items-center h-6">名称:</label>
              <FontSelect id="font-name" value="txt.shx" label="名称" />
              <div className="py-1">
                <Check id="big-font" label="大字体:" checked />
              </div>
              <FontSelect id="big-font-name" value="caddx.shx" label="大字体" />
            </FieldGroup>
            <FieldGroup title="文字测量" className="mt-1.5 pt-[3px] pb-2">
              <div className="flex flex-col gap-1">
                {measures.map((m) => (
                  <div key={m.id} className="flex items-center">
                    <label htmlFor={m.id} className="w-[120px]">{m.label}</label>
                    <input id={m.id} defaultValue={m.value} className={`${inputClass} flex-1 min-w-0 pl-px`} />
                  </div>
                ))}
              </div>
            </FieldGroup>
            <FieldGroup title="文字生成" className="mt-[7px] pb-1.5">
              <div className="flex flex-col gap-1">
                <Check id="backward" label="向后打印文本" />
                <Check id="upside-down" label="倒序打印文本" />
              </div>
            </FieldGroup>
          </div>
          <div className="flex-1 ml-[7px] mt-[5px] flex flex-col gap-[7px]">
            <DialogButton>设置当前</DialogButton>
            <DialogButton>新建</DialogButton>
            <DialogButton>删除</DialogButton>
          </div>
        </div>
        <div className="mt-3 flex justify-end gap-2">
          <DialogButton className="w-[73px]" disabled>应用</DialogButton>
          <DialogButton className="w-[73px]">取消</DialogButton>
          <DialogButton className="w-[73px]">帮助</DialogButton>
        </div>
      </div>
    </div>
  );
}

function Watermark() {
  return (
    <div className="absolute left-[705px] top-[551px] pointer-events-none text-white/90 font-['Liberation_Sans','Noto_Sans_CJK_SC',sans-serif] [text-shadow:0_0_2px_#777,0_0_2px_#aaa] whitespace-nowrap">
      <div className="flex items-end h-[54px]">
        <span className="text-[36px] leading-9 font-bold">Bai</span>
        <svg viewBox="0 0 48 54" className="w-12 h-[54px] drop-shadow-[0_0_1px_#777]" aria-hidden="true">
          <g fill="#fff" fillOpacity=".85">
            <ellipse cx="6" cy="28" rx="5" ry="7" />
            <ellipse cx="17" cy="14" rx="6" ry="9" />
            <ellipse cx="31" cy="14" rx="6" ry="9" />
            <ellipse cx="42" cy="28" rx="5" ry="7" />
            <path d="M24 24c6 0 8 8 14 13s6 15-4 15H14C4 52 4 42 10 37s8-13 14-13z" />
          </g>
          <text x="24" y="48" textAnchor="middle" fontSize="21" fontWeight="bold" fontFamily="Liberation Sans, sans-serif" fill="#c9c9c4">du</text>
        </svg>
        <span className="text-[27px] leading-8 font-bold">经验</span>
      </div>
      <div className="text-xl leading-6">jingyan.baidu.com</div>
    </div>
  );
}

export default function App() {
  return (
    <div className="relative min-h-screen flex flex-col bg-black text-xs text-black font-['Noto_Sans','Noto_Sans_CJK_SC',sans-serif]">
      <TitleBar />
      <div className="flex-1 flex flex-col ml-0.5 mr-[3px] mb-[3px] pl-[7px] pr-1.5 pb-1.5 bg-[#f1f5fc]">
        <RibbonTabs />
        <Ribbon />
        <div className="h-[26px] flex items-end justify-between pl-1 pr-[7px] bg-[#a0a0a0]">
          <div className="h-[21px] flex items-center gap-2 pl-[7px] pr-0.5 border border-b-0 border-[#6f6f6f] border-r-2 border-r-[#eee] bg-[#c2c2c2]">
            <span>DM (7).DWG</span>
            <button aria-label="关闭标签" className="w-[18px] h-[18px] flex items-center justify-center rounded-[3px] border border-[#666] bg-[#8b8b8b]">
              <Icon size="w-2.5 h-2.5" box="0 0 10 10">
                <path d="M2 2l6 6M8 2L2 8" stroke="#5a5a30" strokeWidth="3.500" />
                <path d="M2 2l6 6M8 2L2 8" stroke="#fff" strokeWidth="2" />
              </Icon>
            </button>
          </div>
          <button aria-label="标签列表" className="w-[18px] h-[18px] mb-0.5 flex items-center justify-center rounded-[3px] border border-[#666] bg-[#8b8b8b]">
            <Icon size="w-2.5 h-2.5" box="0 0 10 10">
              <path d="M2 3l3 3 3-3" stroke="#5a5a30" strokeWidth="3.500" />
              <path d="M2 3l3 3 3-3" stroke="#fff" strokeWidth="2" />
            </Icon>
          </button>
        </div>
        <div className="flex-1 flex">
          <SidePanel />
          <DocumentArea />
        </div>
        <CommandArea />
        <StatusBar />
      </div>

      <TextStyleDialog />
      <div className="absolute left-[486px] top-[52px] w-12 h-[98px] border-[7px] border-[#f93a36] pointer-events-none" />
      <svg viewBox="0 0 240 40" className="absolute left-[256px] top-[157px] w-60 h-10 pointer-events-none" aria-hidden="true">
        <path d="M2 30l15-10v5L236 2 19 31v5z" fill="#f93a36" />
      </svg>
      <Watermark />
    </div>
  );
}
